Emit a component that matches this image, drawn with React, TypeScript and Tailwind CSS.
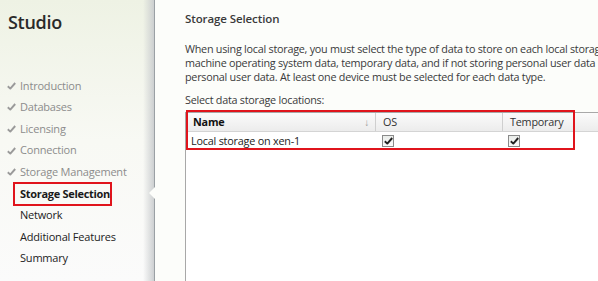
import React from "react";

const Check = ({ className = "" }: { className?: string }) => (
  <svg width="9" height="8" viewBox="0 0 9 8" className={className}>
    <path d="M0.8 4.2 L3.3 6.6 L8.2 1" stroke="currentColor" strokeWidth="1.9" fill="none" strokeLinejoin="round" />
  </svg>
);

const Box = () => (
  <div className="w-[12px] h-[12px] border border-[#8a8a8a] bg-gradient-to-b from-[#e9ece9] to-[#fafafa] flex items-center justify-center text-[#222]">
    <Check />
  </div>
);

export default function App() {
  const done = ["Introduction", "Databases", "Licensing", "Connection", "Storage Management"];
  const rest = ["Network", "Additional Features", "Summary"];
  return (
    <div className="w-[598px] h-[281px] flex overflow-hidden bg-[#fcfdfa]" style={{ fontFamily: "'Open Sans', 'Noto Sans', sans-serif" }}>
      <div className="relative w-[155px] shrink-0 h-full bg-gradient-to-b from-[#eef2e4] via-[#f8f9f4] to-[#fbfbfb]">
        <div className="absolute right-0 top-0 bottom-0 w-[12px] bg-gradient-to-r from-transparent to-[#c9ccce]" />
        <div className="absolute right-0 top-0 bottom-0 w-[1px] bg-[#9aa0a4]" />
        <div className="absolute right-0 top-[187px] w-0 h-0 border-y-[6px] border-y-transparent border-r-[6px] border-r-[#fcfdfa]" />
        <div className="relative pl-[8px] pt-[9px] text-[18px] font-semibold text-[#2a2a2a] tracking-[-0.3px]">Studio</div>
        <div className="relative mt-[39px] flex flex-col text-[11px] tracking-[-0.2px] whitespace-nowrap">
          {done.map((t) => (
            <div key={t} className="h-[21.6px] flex items-center pl-[7px] text-[#8c8c8c]">
              <Check className="mr-[4px] text-[#9a9a9a]" />
              <span>{t}</span>
            </div>
          ))}
          <div className="h-[21.6px] flex items-center ml-[13px]">
            <div className="border-2 border-[#e0141c] h-[24px] w-[99px] flex items-center pl-[5px] font-bold text-[#1a1a1a] tracking-[-0.3px]">
              Storage Selection
            </div>
          </div>
          {rest.map((t) => (
            <div key={t} className="h-[21.6px] flex items-center pl-[20px] text-[#222]">
              {t}
            </div>
          ))}
        </div>
      </div>
      <div className="flex-1 flex flex-col pl-[30px] pt-[10px] text-[#333] min-w-0">
        <div className="text-[11.5px] font-semibold text-[#3a3a3a] whitespace-nowrap tracking-[-0.1px]">Storage Selection</div>
        <div className="mt-[15px] text-[10.8px] leading-[14px] tracking-[-0.25px] whitespace-nowrap text-[#3a3a3a]">
          <div>When using local storage, you must select the type of data to store on each local storage device:</div>
          <div>machine operating system data, temporary data, and if not storing personal user data remotely,</div>
          <div>personal user data. At least one device must be selected for each data type.</div>
        </div>
        <div className="mt-[8px] text-[10.8px] tracking-[-0.25px] whitespace-nowrap text-[#3a3a3a]">Select data storage locations:</div>
        <div className="mt-[4px] flex-1 border-l border-t border-[#a8a8a8] bg-white relative min-w-[420px]">
          <div className="flex h-[19px] bg-gradient-to-b from-[#fbfbfb] to-[#ececec] border-b border-[#d4d4d4] text-[10.8px] tracking-[-0.2px] whitespace-nowrap">
            <div className="w-[190px] flex items-center justify-between pl-[7px] pr-[6px] border-r border-[#cfcfcf]">
              <span className="font-bold text-[#111]">Name</span>
              <span className="text-[#999] text-[10px]">↓</span>
            </div>
            <div className="w-[127px] flex items-center pl-[7px] border-r border-[#cfcfcf]">OS</div>
            <div className="w-[72px] flex items-center pl-[7px] border-r border-[#cfcfcf]">Temporary</div>
            <div className="flex-1" />
          </div>
          <div className="flex h-[18px] text-[10.8px] tracking-[-0.2px] whitespace-nowrap text-[#222]">
            <div className="w-[190px] flex items-center pl-[5px]">Local storage on xen-1</div>
            <div className="w-[127px] flex items-center pl-[6px]"><Box /></div>
            <div className="w-[72px] flex items-center pl-[5px]"><Box /></div>
          </div>
          <div className="absolute left-0 top-[-3px] w-[389px] h-[40px] border-2 border-[#e0141c]" />
        </div>
      </div>
    </div>
  );
}
